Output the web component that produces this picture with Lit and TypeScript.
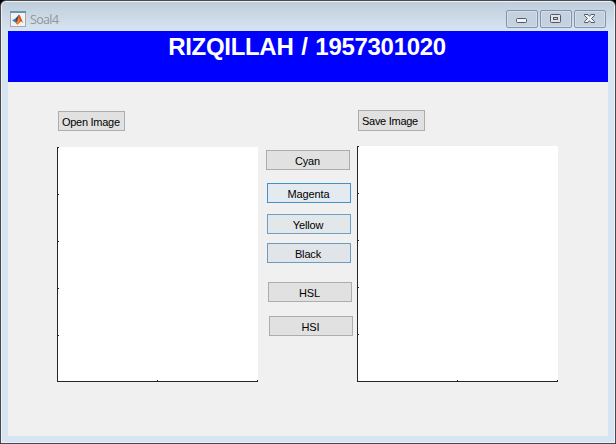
import { LitElement, html, css, svg } from "lit";
import { customElement, property } from "lit/decorators.js";

@customElement("plot-axes")
class PlotAxes extends LitElement {
  @property({ type: Number }) height = 235;

  static styles = css`
    :host { display: block; }
    svg { display: block; }
  `;

  render() {
    const bottom = this.height - 1;
    const ticks = [0, 47, 94, 141, 188];
    return html`<svg width="201" height=${this.height} shape-rendering="crispEdges">
      <rect width="201" height=${this.height} fill="#fff"></rect>
      <g fill="#262626">
        <rect width="1" height=${this.height}></rect>
        <rect y=${bottom} width="201" height="1"></rect>
        ${ticks.map((y) => svg`<rect x="1" y=${y} width="1" height="1"></rect>`)}
        ${[100, 200].map((x) => svg`<rect x=${x} y=${bottom - 1} width="1" height="1"></rect>`)}
      </g>
    </svg>`;
  }
}

@customElement("app-root")
class AppRoot extends LitElement {
  static styles = css`
    :host { display: block; width: 616px; height: 444px; background: #000; }
    * { box-sizing: border-box; }
    .window {
      width: 616px; height: 444px;
      display: flex; flex-direction: column;
      border: 1px solid #4c494d; border-radius: 6px 6px 0 0;
      box-shadow: inset 0 0 0 1px #eaf1f8;
      background: linear-gradient(#bfcddb 0, #d7e4f2 30px, #d7e4f2 100%);
      padding: 0 7px 7px;
      font-family: "Liberation Sans", Arial, sans-serif;
      overflow: hidden;
    }
    .titlebar { height: 30px; flex: none; display: flex; padding: 9px 2px 0; }
    .logo { margin: 1px 4px 0 0; width: 16px; height: 16px; }
    .caption { flex: 1; font: 12.5px/19px "Open Sans", "Noto Sans", sans-serif; color: #949698; letter-spacing: -0.65px; }
    .controls { display: flex; gap: 2px; }
    .control { width: 32px; height: 18px; display: block; }
    .banner {
      height: 51px; flex: none; background: #00f; color: #fff; text-align: center;
      font-weight: bold; font-size: 24px; line-height: 32px; white-space: nowrap;
      letter-spacing: -0.3px; word-spacing: 1.4px; padding-right: 2px;
    }
    .figure {
      flex: 1; background: #f0f0f0; display: grid;
      grid-template-columns: 201px 99px 201px; padding: 28px 0 0 49px;
    }
    .column { display: flex; flex-direction: column; align-items: flex-start; }
    .btn {
      appearance: none; border: 1px solid #adadad; background: #e1e1e1; color: #000;
      border-radius: 0; padding: 2px 1px 0 0; margin: 0; width: 84px; height: 20px;
      font: 11px/16px "Liberation Sans", Arial, sans-serif; text-align: center; white-space: nowrap;
      letter-spacing: -0.15px;
    }
    .file { width: 67px; margin-left: 1px; padding-left: 3px; text-align: left; letter-spacing: -0.28px; }
    .open { margin-top: 1px; margin-bottom: 16px; }
    .save { height: 21px; margin-bottom: 15px; padding-bottom: 1px; }
    .cyan { margin: 40px 0 0 8px; }
    .magenta { margin: 13px 0 0 9px; border-color: #4390c8; background: #e3eaf0; }
    .yellow { margin: 11px 0 0 9px; border-color: #6c9fc8; background: #e2e7ea; padding-right: 2px; }
    .black { margin: 9px 0 0 9px; border-color: #6c9bc0; background: #e1e5e9; padding-right: 2px; }
    .hsl { margin: 19px 0 0 10px; }
    .hsi { margin: 14px 0 0 11px; }
  `;

  private control(glyph: unknown) {
    return html`<svg class="control" viewBox="0 0 32 18">
      <rect x=".5" y=".5" width="31" height="17" rx="1.5" fill="#c4d1df" stroke="#8494ae"></rect>
      <rect x="1.5" y="1.5" width="29" height="15" rx="1" fill="none" stroke="#d3deea"></rect>
      ${glyph}
    </svg>`;
  }

  render() {
    return html`<div class="window">
      <div class="titlebar">
        <svg class="logo" viewBox="0 0 16 16">
          <rect x=".5" y=".5" width="15" height="15" fill="#f3f3f3" stroke="#a5a8ac"></rect>
          <rect width="16" height="2" fill="#6396b8"></rect>
          <path d="M2 9.3 5.5 7.5 8 10 5.5 11.7Z" fill="#3d83b5"></path>
          <path d="M5.5 7.5 9 3.8 8.5 9 6 11.5Z" fill="#314b75"></path>
          <path d="M9 3.5C10.5 4.5 11.5 9 13.5 12L11 10.3 7.3 13.7 5.5 11.5C7.6 10.5 7.8 6 9 3.5Z" fill="#d4501e"></path>
          <path d="M9 5 9.6 10 7.5 12.8 6.5 11.5C8.2 10 8.6 7 9 5Z" fill="#f39a3d"></path>
        </svg>
        <div class="caption">Soal4</div>
        <div class="controls">
          ${this.control(svg`<rect x="10.5" y="8.5" width="10" height="4" rx="1" fill="#f3f3f3" stroke="#535666"></rect>`)}
          ${this.control(svg`<rect x="10.5" y="4.5" width="10" height="8" rx="1" fill="#e4e4e6" stroke="#535666"></rect><rect x="13.5" y="7.5" width="4" height="2" fill="#c4d1df" stroke="#535666"></rect>`)}
          ${this.control(svg`<path d="M10.5 4.5H14L15.5 6.3 17 4.5H20.5V5.5L17.5 8.5 20.5 11.5V12.5H17L15.5 10.7 14 12.5H10.5V11.5L13.5 8.5 10.5 5.5Z" fill="#f3f3f3" stroke="#535666" stroke-linejoin="round"></path>`)}
        </div>
      </div>
      <div class="banner">RIZQILLAH / 1957301020</div>
      <div class="figure">
        <div class="column">
          <button class="btn file open">Open Image</button>
          <plot-axes .height=${235}></plot-axes>
        </div>
        <div class="column">
          <button class="btn cyan">Cyan</button>
          <button class="btn magenta">Magenta</button>
          <button class="btn yellow">Yellow</button>
          <button class="btn black">Black</button>
          <button class="btn hsl">HSL</button>
          <button class="btn hsi">HSI</button>
        </div>
        <div class="column">
          <button class="btn file save">Save Image</button>
          <plot-axes .height=${236}></plot-axes>
        </div>
      </div>
    </div>`;
  }
}
